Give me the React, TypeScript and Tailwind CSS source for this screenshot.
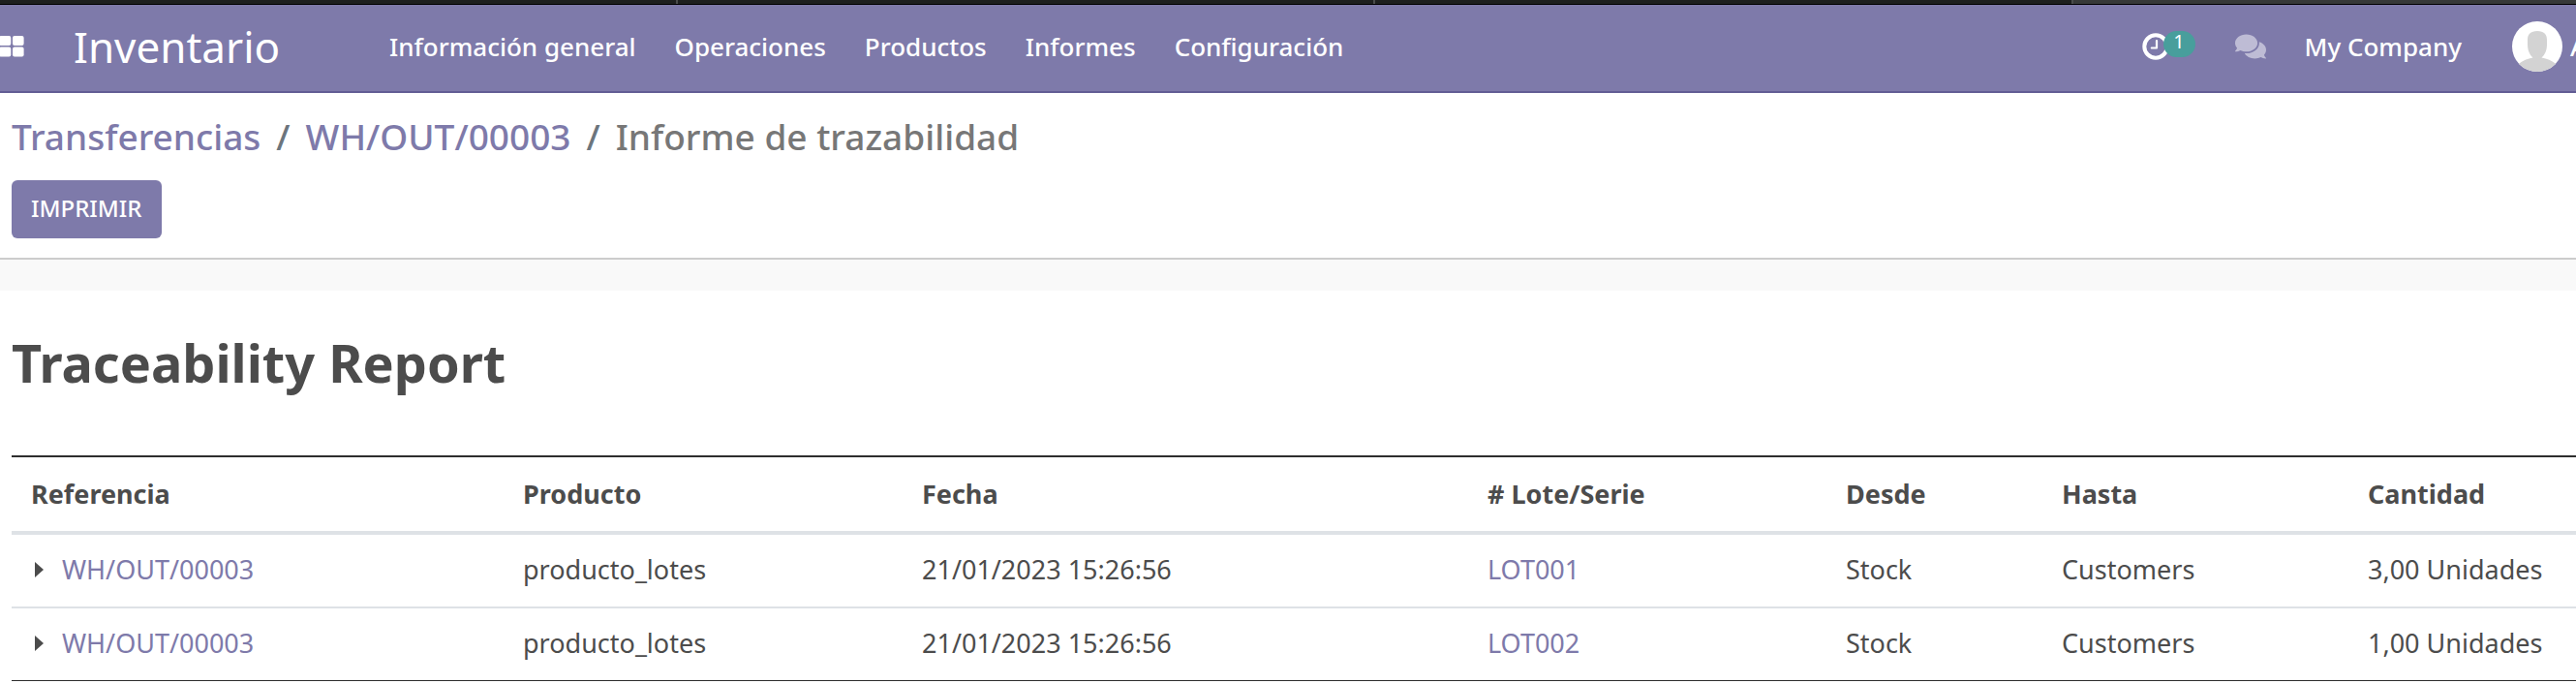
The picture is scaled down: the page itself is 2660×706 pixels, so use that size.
import { FaComments } from "react-icons/fa";

const menu = ["Información general", "Operaciones", "Productos", "Informes", "Configuración"];

const columns = [
  { label: "Referencia", width: "w-[508px]" },
  { label: "Producto", width: "w-[412px]" },
  { label: "Fecha", width: "w-[584px]" },
  { label: "# Lote/Serie", width: "w-[370px]" },
  { label: "Desde", width: "w-[223px]" },
  { label: "Hasta", width: "w-[316px]" },
  { label: "Cantidad", width: "w-[235px]" },
];

const rows = [
  { ref: "WH/OUT/00003", product: "producto_lotes", date: "21/01/2023 15:26:56", lot: "LOT001", from: "Stock", to: "Customers", qty: "3,00 Unidades" },
  { ref: "WH/OUT/00003", product: "producto_lotes", date: "21/01/2023 15:26:56", lot: "LOT002", from: "Stock", to: "Customers", qty: "1,00 Unidades" },
];

function AppsIcon() {
  return (
    <svg viewBox="0 0 25 22" className="h-[22px] w-[25px]" fill="currentColor" aria-hidden="true">
      <rect x="-1" y="0" width="12.300" height="10" rx="2" />
      <rect x="13" y="0" width="11.600" height="10" rx="2" />
      <rect x="-1" y="11.500" width="12.300" height="10" rx="2" />
      <rect x="13" y="11.500" width="11.600" height="10" rx="2" />
    </svg>
  );
}

function ClockIcon() {
  return (
    <svg viewBox="0 0 28 28" className="size-7" fill="none" stroke="currentColor" aria-hidden="true">
      <circle cx="14" cy="14" r="11.7" strokeWidth="4" />
      <path d="M15 8v7.500H9.800" strokeWidth="2.200" strokeLinejoin="round" strokeLinecap="round" />
    </svg>
  );
}

function Avatar() {
  return (
    <svg viewBox="0 0 52 52" className="size-[52px] shrink-0 rounded-full" aria-hidden="true">
      <rect width="52" height="52" fill="#fff" />
      <path
        d="M26 10c-7 0-10 3.500-10 9v5c0 5.500 2 10.500 5.500 13.500C16 38.500 11 40.500 6.500 44V52h39v-8c-4.500-3.500-9.500-5.500-15-6.500C34 34.500 36 29.500 36 24v-5c0-5.500-3-9-10-9z"
        fill="#d3d3d3"
      />
    </svg>
  );
}

export default function App() {
  return (
    <div className="min-h-screen overflow-x-hidden bg-white font-['Noto_Sans','Lucida_Grande',sans-serif] text-[26px] leading-[38px] text-[#4c4c4c]">
      <div className="flex h-[5px] border-b border-black bg-[#1e201f]">
        <div className="w-[26.3%] border-r-2 border-[#4a4c4b]" />
        <div className="w-[27.1%] border-r-2 border-[#4a4c4b]" />
        <div className="w-[27.1%] border-r-2 border-[#4a4c4b]" />
        <div className="flex-1 bg-[#373938]" />
      </div>

      <header className="flex h-[91px] items-center overflow-hidden border-b-2 border-[#625d94] bg-[#7e7aaa] pb-1 whitespace-nowrap text-white">
        <button type="button" aria-label="Aplicaciones">
          <AppsIcon />
        </button>
        <a href="#inventario" className="ml-[51px] w-[326px] text-[44px] leading-[60px]">Inventario</a>
        <nav className="flex gap-10 font-medium">
          {menu.map((m) => (
            <a key={m} href="#menu">{m}</a>
          ))}
        </nav>
        <div className="ml-auto flex items-center font-medium">
          <button type="button" aria-label="Actividades" className="relative mr-10 w-14">
            <ClockIcon />
            <span className="absolute -top-0.5 left-[22px] flex h-[27px] w-[33px] items-center justify-center rounded-full bg-[#489e9c] pb-1 text-[20px] leading-6 font-normal">1</span>
          </button>
          <button type="button" aria-label="Conversaciones" className="mr-10 text-[#bebcd5]">
            <FaComments className="size-8" />
          </button>
          <a href="#company" className="mr-[52px]">My Company</a>
          <a href="#user" className="flex w-[66px] items-center gap-2">
            <Avatar />
            <span>A</span>
          </a>
        </div>
      </header>

      <section className="border-b-2 border-[#cccccc] px-3 py-5">
        <nav className="flex h-[50px] items-center gap-4 text-[37px] leading-[50px] font-medium text-[#6c757d]">
          <a href="#transferencias" className="text-[#7e7aaa]">Transferencias</a>
          <span>/</span>
          <a href="#out" className="text-[#7e7aaa]">WH/OUT/00003</a>
          <span>/</span>
          <span className="text-[#777777]">Informe de trazabilidad</span>
        </nav>
        <button type="button" className="mt-5 block h-[60px] rounded-md bg-[#7e7aaa] px-5 pb-0.5 text-[24px] font-medium text-white">IMPRIMIR</button>
      </section>

      <div className="h-8 bg-[#f9f9f9]" />

      <main className="pl-3 text-[27px]">
        <h1 className="pt-[38px] pb-[60px] text-[54px] leading-[72px] font-bold">Traceability Report</h1>
        <table className="w-full table-fixed border-separate border-spacing-0 border-t-2 border-b border-[#2e2e2e] text-left whitespace-nowrap">
          <thead>
            <tr>
              {columns.map((c) => (
                <th key={c.label} className={`${c.width} h-[80px] border-b-4 border-[#dee2e6] p-0 pl-5 font-bold`}>{c.label}</th>
              ))}
            </tr>
          </thead>
          <tbody>
            {rows.map((r, i) => (
              <tr key={r.lot} className={i > 0 ? "*:h-[76px] *:border-t-2 *:border-[#dee2e6] *:p-0 *:pb-0.5 *:pl-5" : "*:h-[74px] *:p-0 *:pb-0.5 *:pl-5"}>
                <td>
                  <div className="flex items-center">
                    <button type="button" aria-label="Desplegar" className="w-8 pl-1">
                      <svg viewBox="0 0 9 16" className="h-4 w-[9px]" fill="currentColor" aria-hidden="true">
                        <path d="M0 0l9 8-9 8z" />
                      </svg>
                    </button>
                    <a href="#ref" className="text-[#7e7aaa]">{r.ref}</a>
                  </div>
                </td>
                <td>{r.product}</td>
                <td>{r.date}</td>
                <td><a href="#lot" className="text-[#7e7aaa]">{r.lot}</a></td>
                <td>{r.from}</td>
                <td>{r.to}</td>
                <td>{r.qty}</td>
              </tr>
            ))}
          </tbody>
        </table>
      </main>
    </div>
  );
}
